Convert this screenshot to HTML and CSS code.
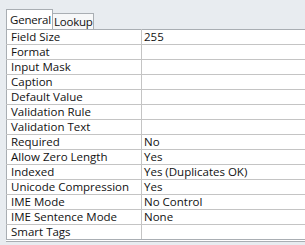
FILE: index.html
```html
<!DOCTYPE html>
<html>
  <head>
    <title>Field Properties</title>
    <link rel="stylesheet" href="styles.css">
  </head>
  <body>
    <div class="pane">
      <div class="tabs">
        <div class="tab active">General</div>
        <div class="tab">Lookup</div>
      </div>
      <table class="props">
        <tr><td>Field Size</td><td>255</td></tr>
        <tr><td>Format</td><td></td></tr>
        <tr><td>Input Mask</td><td></td></tr>
        <tr><td>Caption</td><td></td></tr>
        <tr><td>Default Value</td><td></td></tr>
        <tr><td>Validation Rule</td><td></td></tr>
        <tr><td>Validation Text</td><td></td></tr>
        <tr><td>Required</td><td>No</td></tr>
        <tr><td>Allow Zero Length</td><td>Yes</td></tr>
        <tr><td>Indexed</td><td>Yes (Duplicates OK)</td></tr>
        <tr><td>Unicode Compression</td><td>Yes</td></tr>
        <tr><td>IME Mode</td><td>No Control</td></tr>
        <tr><td>IME Sentence Mode</td><td>None</td></tr>
        <tr><td>Smart Tags</td><td></td></tr>
      </table>
    </div>
  </body>
</html>
```

FILE: styles.css
```css
html, body {
  margin: 0;
  background-color: #e8ecf0;
  font-family: "Open Sans", "Noto Sans", Arial, sans-serif;
  font-size: 11.5px;
  color: #111111;
  overflow: hidden;
}
.pane {
  padding: 9px 0 0 6px;
}
.tabs {
  display: flex;
  align-items: flex-end;
  height: 20px;
}
.tab {
  box-sizing: border-box;
  height: 16px;
  line-height: 15px;
  padding: 0 0 0 1px;
  border: 1px solid #a9aeb3;
  border-bottom: none;
  border-left: none;
  background-color: #f7f8f9;
  letter-spacing: -0.2px;
}
.tab.active {
  height: 20px;
  line-height: 19px;
  padding: 0 1px 0 3px;
  border-left: 1px solid #a9aeb3;
  background-color: #ffffff;
}
.props {
  border-collapse: collapse;
  background-color: #ffffff;
  border-top: 1px solid #a9aeb3;
  border-left: 1px solid #a9aeb3;
  border-bottom: 3px double #a9aeb3;
  width: 299px;
}
.props td {
  height: 14px;
  padding: 0 0 0 4px;
  border-bottom: 1px solid #c4c4c4;
  line-height: 14px;
  white-space: nowrap;
}
.props td:first-child {
  width: 130px;
  border-right: 1px solid #c4c4c4;
}
.props td:last-child {
  padding-left: 2px;
}
.props tr:last-child td {
  border-bottom: none;
}
```
